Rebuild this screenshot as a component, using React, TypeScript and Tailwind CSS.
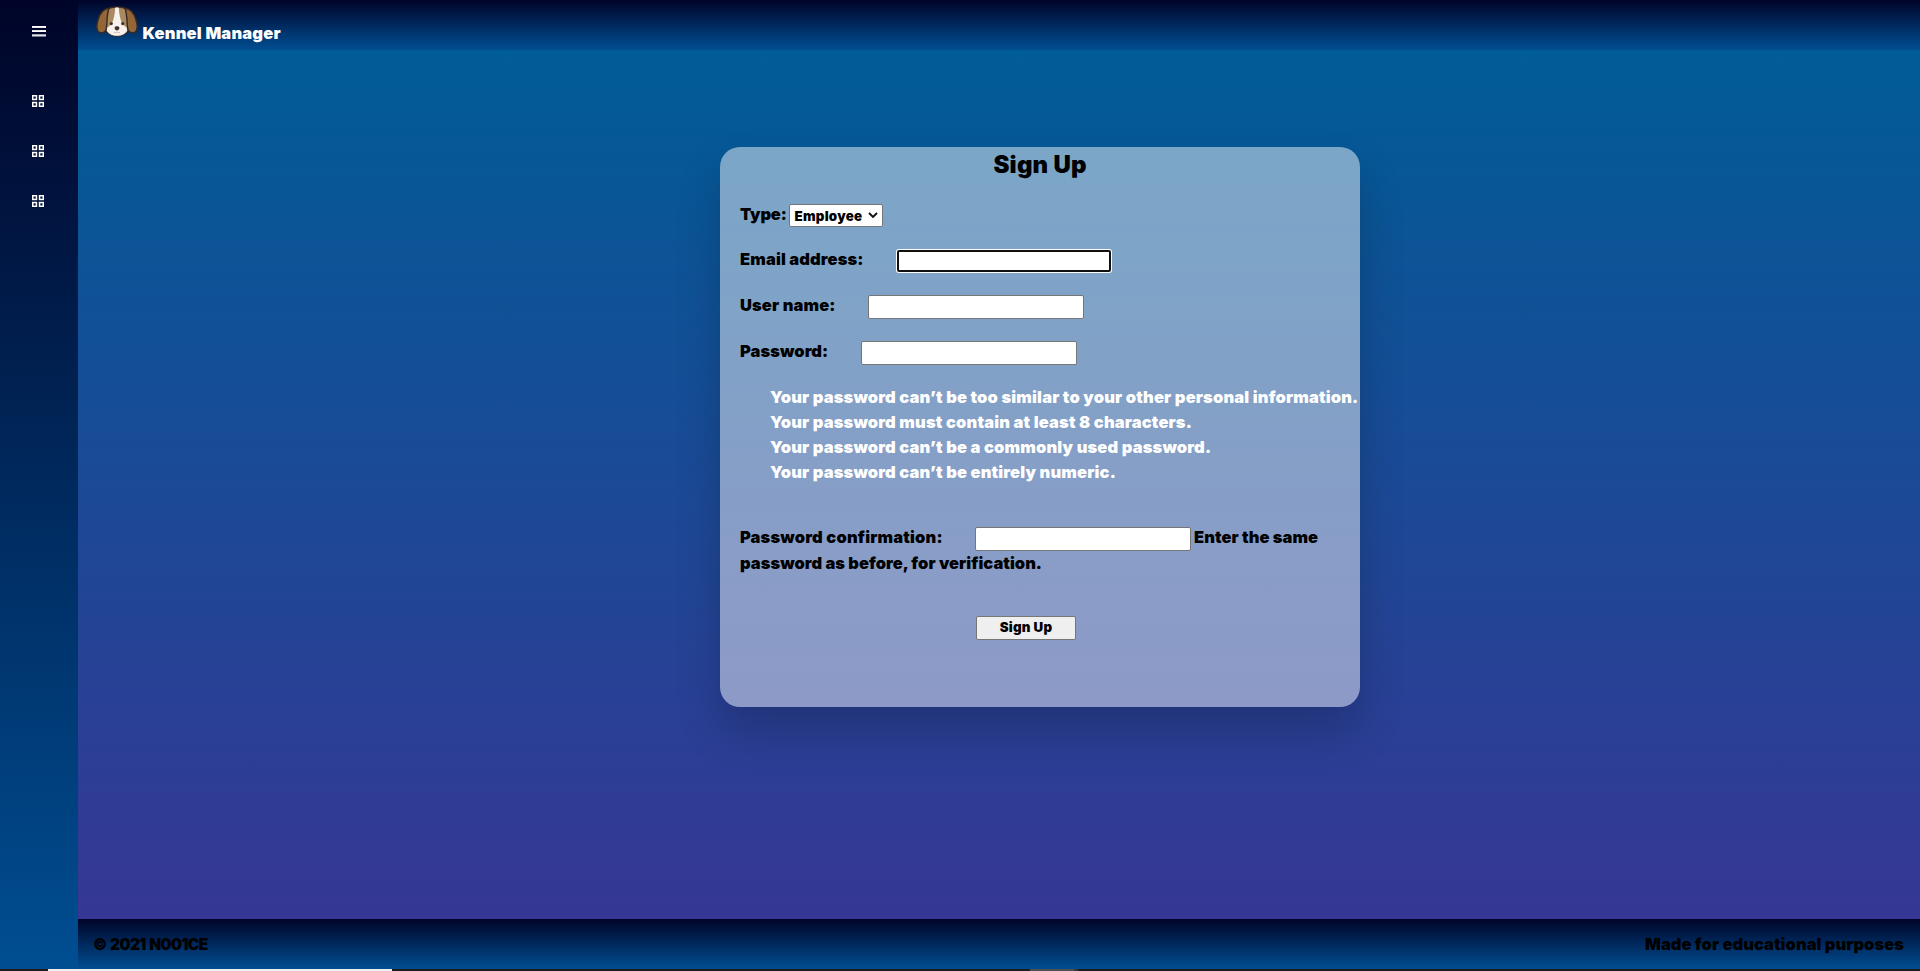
import type { ReactNode } from "react";

function MenuIcon() {
  return (
    <svg width="14" height="11" viewBox="0 0 14 11" fill="#fff" aria-hidden="true">
      <rect y="0" width="14" height="1.900" />
      <rect y="4.100" width="14" height="1.900" />
      <rect y="8.300" width="14" height="2.200" fillOpacity="0.9" />
    </svg>
  );
}

function GridIcon() {
  return (
    <svg width="12" height="12" viewBox="0 0 12 12" fill="none" stroke="#fff" strokeWidth="1.500" aria-hidden="true">
      <rect x="0.75" y="0.75" width="3.700" height="3.700" />
      <rect x="7.550" y="0.75" width="3.700" height="3.700" />
      <rect x="0.75" y="7.550" width="3.700" height="3.700" />
      <rect x="7.550" y="7.550" width="3.700" height="3.700" />
    </svg>
  );
}

function DogLogo() {
  return (
    <svg width="42" height="31" viewBox="0 0 42 31" aria-hidden="true">
      <path d="M12 3C16 .3 26 .3 30 3c3 3 4 9 4 15 0 6-3 8.500-6 10.500-4 2.200-10 2.200-14 0C11 26.500 8 24 8 18 8 12 9 6 12 3Z" fill="#ab8a61" stroke="#3b2923" strokeWidth="1.300" />
      <path d="M19.200 1.600h3.600c.3 7 1.500 12 3.500 16.400 1.500 2 4.700 3 5.500 4.500-.4 3-2 4.500-4.300 5.700-3.800 2-9.200 2-13 0-2.300-1.200-3.900-2.700-4.300-5.700.8-1.500 4-2.500 5.500-4.500 2-4.400 3.200-9.400 3.500-16.400Z" fill="#f6f1ed" />
      <path d="M13 2.200C7 3 3.500 8 2 14 .5 19 .2 24 3 26c3 1.800 6.500.5 7.300-3 .9-5 .2-14 2.700-20.800Z" fill="#936638" stroke="#3b2923" strokeWidth="1.400" strokeLinejoin="round" />
      <path d="M29 2.200C35 3 38.500 8 40 14c1.500 5 1.800 10-1 12-3 1.800-6.500.5-7.300-3-.9-5-.2-14-2.700-20.800Z" fill="#936638" stroke="#3b2923" strokeWidth="1.400" strokeLinejoin="round" />
      <circle cx="15.300" cy="17.600" r="1.600" fill="#41302b" />
      <circle cx="26.700" cy="17.600" r="1.600" fill="#41302b" />
      <path d="M18.600 22c0-1.200 1-1.700 2.400-1.700s2.400.5 2.400 1.700c0 1.300-1.300 2.500-2.400 2.500S18.600 23.300 18.600 22Z" fill="#41302b" />
      <path d="M18 26.300c1 .5 2.200.4 3-.5.800.9 2 1 3 .5" fill="none" stroke="#b9a79c" strokeWidth=".7" />
    </svg>
  );
}

function Label({ className, children }: { className: string; children: ReactNode }) {
  return <span className={`block shrink-0 whitespace-nowrap leading-6 ${className}`}>{children}</span>;
}

const inputBox = "block h-6 w-[216px] shrink-0 rounded-[2px] border border-[#767676] bg-white px-1 outline-none";

export default function App() {
  return (
    <div className="flex h-[971px] w-full flex-col overflow-hidden font-['Inter',sans-serif] text-[16.5px] font-black text-black">
      <div className="flex h-[969px]">
        <aside className="flex w-[78px] shrink-0 flex-col items-start bg-linear-to-b/srgb from-[#000428] to-[#004e92] pl-8">
          <button className="mt-[26px] block h-[11px]" aria-label="Menu">
            <MenuIcon />
          </button>
          <nav className="mt-[58px] flex flex-col gap-[38px]">
            <a className="block h-3"><GridIcon /></a>
            <a className="block h-3"><GridIcon /></a>
            <a className="block h-3"><GridIcon /></a>
          </nav>
        </aside>

        <div className="flex min-w-0 grow flex-col">
          <header className="flex h-[50px] shrink-0 items-start bg-linear-to-b/srgb from-[#000428] to-[#004e92] pl-[18px]">
            <div className="mt-[6px]"><DogLogo /></div>
            <span className="ml-[4.5px] mt-[21px] whitespace-nowrap leading-6 tracking-[0.2px] text-white">Kennel Manager</span>
          </header>

          <main className="flex grow items-start justify-center bg-linear-to-b/srgb from-[#005c97] to-[#363795] pl-[82px] pt-[97px]">
            <form className="h-[560px] w-[640px] rounded-[20px] bg-white/47 shadow-[0_25px_45px_rgba(0,0,0,0.2)]">
              <h1 className="h-[34px] pt-px text-center text-2xl leading-[34px] tracking-[0.2px]">Sign Up</h1>

              <div className="mt-[23px] flex h-[23px] items-center pl-5">
                <Label className="w-[49px] pb-[3px] tracking-[-0.2px]">Type:</Label>
                <div className="flex h-[23px] w-[94px] items-center rounded-[2px] border border-[#767676] bg-white pl-[4.5px]">
                  <span className="w-[71px] text-[13.33px] leading-5 tracking-[0.27px]">Employee</span>
                  <svg className="ml-[2px]" width="10" height="7" viewBox="0 0 10 7" fill="none" stroke="#111" strokeWidth="1.900" aria-hidden="true">
                    <path d="M1 1l4 4 4-4" />
                  </svg>
                </div>
              </div>

              <div className="mt-[22px] flex h-6 items-center pl-5">
                <Label className="w-[157px] pb-1 tracking-[0.12px]">Email address:</Label>
                <input aria-label="Email address" className="block h-[22px] w-[214px] shrink-0 rounded-[2px] border-2 border-[#101010] bg-white px-1 shadow-[0_0_0_1px_#fff] outline-none" />
              </div>

              <div className="mt-[22px] flex h-6 items-center pl-5">
                <Label className="w-[128px] pb-1 tracking-[0.12px]">User name:</Label>
                <input aria-label="User name" className={inputBox} />
              </div>

              <div className="mt-[22px] flex h-6 items-center pl-5">
                <Label className="w-[121px] pb-1 tracking-[0.06px]">Password:</Label>
                <input aria-label="Password" type="password" className={inputBox} />
              </div>

              <ul className="mt-5 whitespace-nowrap pl-[50px] leading-[25px] tracking-[0.15px] text-white">
                <li>Your password can’t be too similar to your other personal information.</li>
                <li>Your password must contain at least 8 characters.</li>
                <li>Your password can’t be a commonly used password.</li>
                <li>Your password can’t be entirely numeric.</li>
              </ul>

              <div className="mt-[42px] flex h-6 items-center pl-5">
                <Label className="w-[235px] pb-1 tracking-[0.16px]">Password confirmation:</Label>
                <input aria-label="Password confirmation" type="password" className={inputBox} />
                <Label className="ml-[3px] pb-1 tracking-[0.04px]">Enter the same</Label>
              </div>
              <p className="pl-5 leading-6 tracking-[0.02px]">password as before, for verification.</p>

              <button type="button" className="ml-64 mt-[41px] block h-6 w-[100px] rounded-[2px] border border-[#767676] bg-[#efefef] pb-px text-[13.33px] leading-[21px] tracking-[0.24px]">
                Sign Up
              </button>
            </form>
          </main>

          <footer className="flex h-[50px] shrink-0 items-center justify-between bg-linear-to-b/srgb from-[#000428] to-[#004e92] pl-[15px] pr-4">
            <span className="pt-px text-[15.5px] tracking-[-0.6px] [word-spacing:1px]">© 2021 N001CE</span>
            <span className="tracking-[0.04px]">Made for educational purposes</span>
          </footer>
        </div>
      </div>

      <div className="flex h-0.5 bg-[#1c1c1f]">
        <div className="ml-12 w-[344px] bg-[#f0f0f0]" />
        <div className="ml-[638px] w-[44px] bg-[#505053]" />
        <div className="w-1 bg-[#38383b]" />
      </div>
    </div>
  );
}
